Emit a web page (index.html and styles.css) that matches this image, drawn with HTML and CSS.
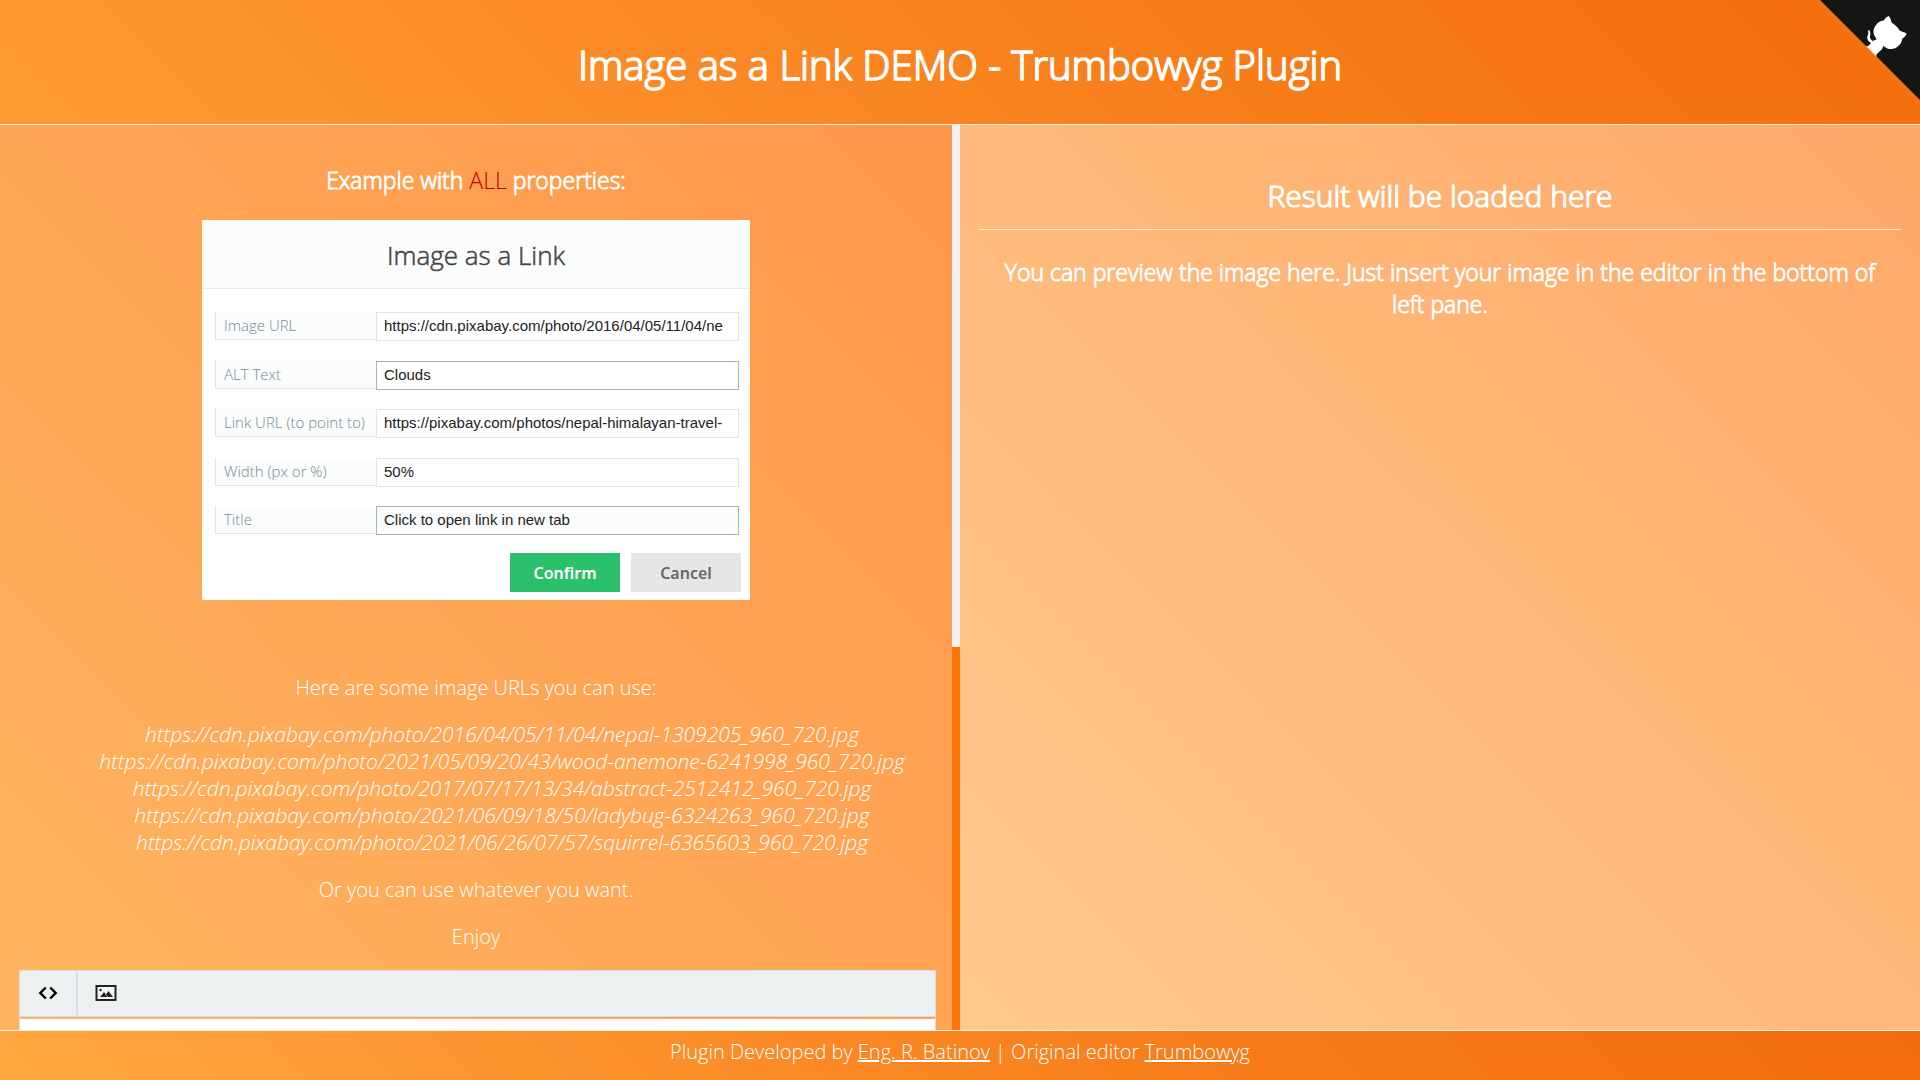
FILE: index.html
```html
<!DOCTYPE html>
<html lang="en">
<head>
<meta charset="utf-8">
<title>Image as a Link DEMO - Trumbowyg Plugin</title>
<link rel="stylesheet" href="styles.css">
</head>
<body>
<header class="header">
  <h1 class="title">Image as a Link DEMO - Trumbowyg Plugin</h1>
  <a class="corner" href="#" aria-label="View source on GitHub">
    <svg viewBox="0 0 250 250" width="100" height="100" aria-hidden="true">
      <path fill="#151513" d="M0,0 L115,115 L130,115 L142,142 L250,250 L250,0 Z"/>
      <path fill="#fff" d="M128.3,109.0 C113.8,99.7 119.0,89.6 119.0,89.6 C122.0,82.7 120.5,78.6 120.5,78.6 C119.2,72.0 123.4,76.3 123.4,76.3 C127.3,80.9 125.5,87.3 125.5,87.3 C122.9,97.6 130.6,101.9 134.4,103.2"/>
      <path fill="#fff" d="M115.0,115.0 C114.9,115.1 118.7,116.5 119.8,115.4 L133.7,101.6 C136.9,99.2 139.9,98.4 142.2,98.6 C133.8,88.0 127.5,74.4 143.8,58.0 C148.5,53.4 154.0,51.2 159.7,51.0 C160.3,49.4 163.2,43.6 171.4,40.1 C171.4,40.1 176.1,42.5 178.8,56.2 C183.1,58.6 187.2,61.8 190.9,65.4 C194.5,69.0 197.7,73.2 200.1,77.6 C213.8,80.2 216.3,84.9 216.3,84.9 C212.7,93.1 206.9,96.0 205.4,96.6 C205.1,102.4 203.0,107.8 198.3,112.5 C181.9,128.9 168.3,122.5 157.7,114.1 C157.9,116.9 156.7,120.9 152.7,124.9 L141.0,136.5 C139.8,137.7 141.6,141.9 141.8,141.8 Z"/>
    </svg>
  </a>
</header>
<main class="panes">
  <div class="scroller">
    <section class="pane pane-left">
      <h3 class="lead">Example with <span class="accent">ALL</span> properties:</h3>
      <form class="dialog">
        <h2 class="dialog-title">Image as a Link</h2>
        <div class="fields">
          <div class="field"><label for="url">Image URL</label><input id="url" type="text" value="https://cdn.pixabay.com/photo/2016/04/05/11/04/ne"></div>
          <div class="field strong"><label for="alt">ALT Text</label><input id="alt" type="text" value="Clouds"></div>
          <div class="field"><label for="link">Link URL (to point to)</label><input id="link" type="text" value="https://pixabay.com/photos/nepal-himalayan-travel-"></div>
          <div class="field"><label for="width">Width (px or %)</label><input id="width" type="text" value="50%"></div>
          <div class="field strong tinted"><label for="ttl">Title</label><input id="ttl" type="text" value="Click to open link in new tab"></div>
        </div>
        <div class="actions">
          <button type="button" class="btn confirm">Confirm</button>
          <button type="button" class="btn cancel">Cancel</button>
        </div>
      </form>
      <p>Here are some image URLs you can use:</p>
      <ul class="urls">
        <li>https://cdn.pixabay.com/photo/2016/04/05/11/04/nepal-1309205_960_720.jpg</li>
        <li>https://cdn.pixabay.com/photo/2021/05/09/20/43/wood-anemone-6241998_960_720.jpg</li>
        <li>https://cdn.pixabay.com/photo/2017/07/17/13/34/abstract-2512412_960_720.jpg</li>
        <li>https://cdn.pixabay.com/photo/2021/06/09/18/50/ladybug-6324263_960_720.jpg</li>
        <li>https://cdn.pixabay.com/photo/2021/06/26/07/57/squirrel-6365603_960_720.jpg</li>
      </ul>
      <p>Or you can use whatever you want.</p>
      <p>Enjoy</p>
      <div class="editor">
        <div class="toolbar">
          <button type="button" class="tool tool-code" aria-label="View HTML">
            <svg viewBox="0 0 20 14" width="20" height="14" aria-hidden="true"><path d="M7.800 1.500 2.300 7l5.500 5.500M12.200 1.500 17.700 7l-5.500 5.500" fill="none" stroke="#000" stroke-width="2.400"/></svg>
          </button>
          <button type="button" class="tool" aria-label="Insert image as a link">
            <svg viewBox="0 0 22 18" width="22" height="18" aria-hidden="true"><path d="M1.500 2h19v14h-19z" fill="#f4f6f6" stroke="#222" stroke-width="2"/><circle cx="5.500" cy="6" r="1.200" fill="#222"/><path d="M5 13l4-5 2 2.500L13.500 7l4.500 6z" fill="#222"/><path d="M10.500 10.500l2.500 2.500" stroke="#f4f6f6" stroke-width=".6"/></svg>
          </button>
        </div>
        <div class="editor-body" contenteditable="true" role="textbox" aria-label="Editor"></div>
      </div>
    </section>
    <div class="track" aria-hidden="true"><div class="thumb"></div></div>
  </div>
  <section class="pane pane-right">
    <h2 class="result-title">Result will be loaded here</h2>
    <h3 class="result-text">You can preview the image here. Just insert your image in the editor in the bottom of left pane.</h3>
  </section>
</main>
<footer class="footer">Plugin Developed by <a href="#">Eng. R. Batinov</a> | Original editor <a href="#">Trumbowyg</a></footer>
</body>
</html>
```
FILE: styles.css
```css
* { box-sizing: border-box; }

body {
  margin: 0;
  height: 100vh;
  display: flex;
  flex-direction: column;
  font-family: "Open Sans", sans-serif;
  font-weight: 300;
  font-size: 20px;
  line-height: 27px;
  color: #fff;
}

h1, h2, h3, p { margin: 0; font-weight: 300; }

h1, h2, h3 { -webkit-text-stroke: 0.04em; }

.header {
  flex: none;
  position: relative;
  border-bottom: 1px solid #f1f1f1;
  padding: 38px 100px 32px;
  background: linear-gradient(45deg, #ff9c34, #fa8824 40%, #f77c18 65%, #f36d0c);
  text-align: center;
}

.title { font-size: 40px; line-height: 54px; }

.corner { position: absolute; top: 0; right: 0; }
.corner svg { display: block; }

.panes {
  flex: 1;
  min-height: 0;
  display: grid;
  grid-template-columns: 1fr 1fr;
  grid-template-rows: 100%;
}

.scroller {
  display: grid;
  grid-template-columns: 1fr 8px;
  grid-template-rows: 100%;
}

.track {
  display: grid;
  grid-template-rows: 15fr 11fr;
  background: #ff7409;
}
.thumb { background: #f1f1f1; }

.pane { text-align: center; }

.pane-left {
  padding: 39px 16px 20px;
  overflow-y: auto;
  scrollbar-width: none;
  background: linear-gradient(45deg, #ffb560, #ff964a);
}

.pane-left p { margin-bottom: 20px; }

.lead { font-size: 23px; line-height: 32px; }
.accent { color: #c00000; -webkit-text-stroke: 0; }

.dialog {
  width: 548px;
  margin: 24px auto 74px;
  padding-bottom: 8px;
  background: #fff;
  color: #444;
}

.dialog-title {
  border-bottom: 1px solid #e9eced;
  padding: 17px 0 15px;
  background: #fbfcfc;
  font-size: 26px;
  line-height: 36px;
  -webkit-text-stroke: 0.02em;
}

.fields {
  display: grid;
  align-content: space-between;
  height: 264px;
  padding: 23px 11px 18px 13px;
}

.field { display: grid; grid-template-columns: 161px 1fr; text-align: left; }

.field label {
  height: 28px;
  border: 1px solid #dfe5e6;
  border-width: 0 0 1px 1px;
  padding-left: 8px;
  background: #fbfcfc;
  color: #6f8d97;
  font-size: 15px;
  line-height: 27px;
}

.field input {
  width: 100%;
  height: 29px;
  border: 1px solid #dee3e4;
  padding: 0 7px 2px;
  background: #fff;
  color: #222;
  font: 15px "Liberation Sans", sans-serif;
}

.field.strong input { border-color: #a5b6ba; }
.field.tinted input { background: #fbfcfc; }

.actions { display: flex; justify-content: flex-end; gap: 11px; padding-right: 9px; }

.btn {
  width: 110px;
  height: 39px;
  border: 0;
  font: 600 16px "Noto Sans", sans-serif;
}
.confirm { background: #2bc06a; color: #fff; }
.cancel { background: #e6e6e6; color: #666; }

.urls {
  margin: 0 0 20px;
  padding: 0 0 0 52px;
  list-style: none;
  font-size: 21px;
  font-style: italic;
}

.editor { margin-left: 3px; min-height: 610px; border: 1px solid #d7e0e2; }

.toolbar {
  display: flex;
  height: 46px;
  border-bottom: 1px solid #d0dcdf;
  margin-bottom: 2px;
  background: #ecf0f1;
}

.tool {
  display: grid;
  place-items: center;
  width: 55px;
  height: 44px;
  border: 0;
  padding: 0;
  background: none;
}
.tool-code { width: 58px; border-right: 2px solid #d7e0e2; }

.editor-body { height: 560px; background: #fff; }

.pane-right {
  padding: 52px 19px 20px;
  background: linear-gradient(45deg, #ffca8c, #ffa868);
}

.result-title {
  border-bottom: 1px solid #ffe9d6;
  padding-bottom: 14px;
  font-size: 30px;
  line-height: 38px;
}

.result-text {
  margin-top: 26px;
  padding: 0 12px;
  font-size: 23px;
  line-height: 32px;
}

.footer {
  flex: none;
  border-top: 1px solid #f1f1f1;
  padding: 7px 0 15px;
  background: linear-gradient(45deg, #ffa940, #fd9630 25%, #fa8824 45%, #f77c18 65%, #f36d0c);
  text-align: center;
}
.footer a { color: #fff; }
```
